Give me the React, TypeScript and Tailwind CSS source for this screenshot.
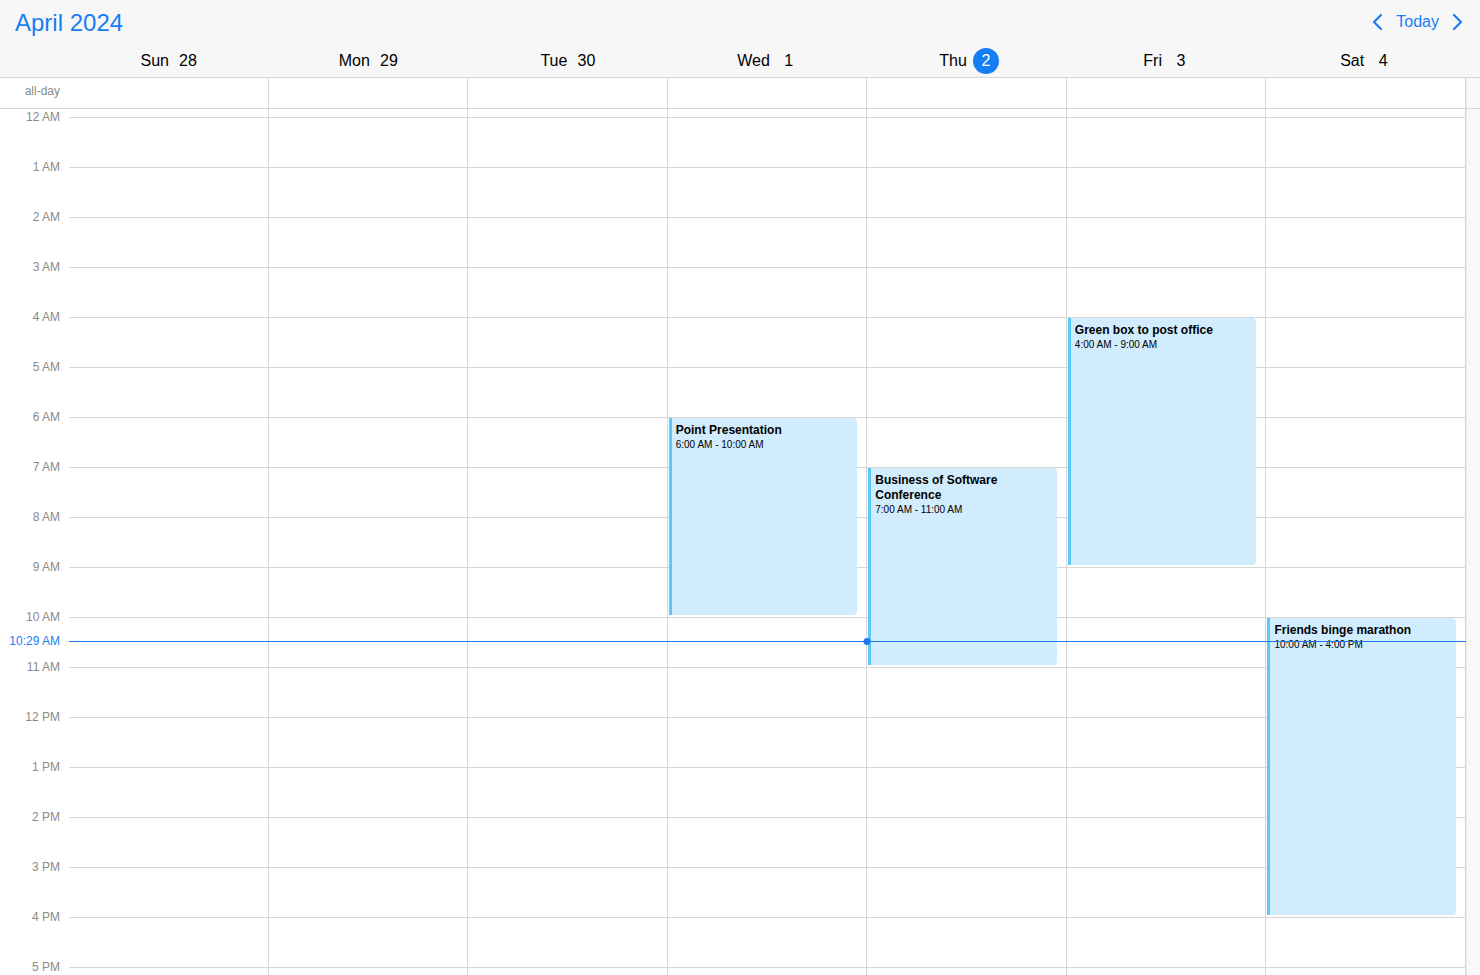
import React from "react";

type CalEvent = {
  day: number;
  start: number;
  end: number;
  title: string;
  time: string;
};

const days = [
  { name: "Sun", date: 28 },
  { name: "Mon", date: 29 },
  { name: "Tue", date: 30 },
  { name: "Wed", date: 1 },
  { name: "Thu", date: 2 },
  { name: "Fri", date: 3 },
  { name: "Sat", date: 4 },
];

const TODAY = 4;
const HOUR = 50;
const TOP_PAD = 8;

const events: CalEvent[] = [
  { day: 3, start: 6, end: 10, title: "Point Presentation", time: "6:00 AM - 10:00 AM" },
  { day: 4, start: 7, end: 11, title: "Business of Software Conference", time: "7:00 AM - 11:00 AM" },
  { day: 5, start: 4, end: 9, title: "Green box to post office", time: "4:00 AM - 9:00 AM" },
  { day: 6, start: 10, end: 16, title: "Friends binge marathon", time: "10:00 AM - 4:00 PM" },
];

const hours = Array.from({ length: 24 }, (_, h) => {
  const suffix = h < 12 ? "AM" : "PM";
  const n = h % 12 === 0 ? 12 : h % 12;
  return `${n} ${suffix}`;
});

// 10:29 AM, snapped to a whole pixel so the 1px line stays crisp
const nowOffset = Math.round(TOP_PAD + (10 + 29 / 60) * HOUR);

function Chevron({ dir }: { dir: "left" | "right" }) {
  return (
    <svg width="12" height="18" viewBox="0 0 12 18" fill="none" stroke="currentColor" strokeWidth="2.2" strokeLinecap="round" strokeLinejoin="round">
      {dir === "left" ? <path d="M10 2 L3 9 L10 16" /> : <path d="M2 2 L9 9 L2 16" />}
    </svg>
  );
}

export default function App() {
  return (
    <div className="flex h-screen flex-col overflow-hidden bg-white font-['Liberation_Sans',Arial,sans-serif] text-black">
      {/* header */}
      <div className="border-b border-[#d6d6d6] bg-[#f7f7f7]">
        <div className="flex h-[44px] items-center justify-between pl-[15px] pr-[16px]">
          <h1 className="pt-[2px] text-[24px] leading-none text-[#167ef5]">April 2024</h1>
          <div className="flex items-center gap-[13px] text-[#167ef5]">
            <Chevron dir="left" />
            <span className="text-[16px]">Today</span>
            <Chevron dir="right" />
          </div>
        </div>
        <div className="ml-[69px] mr-[14px] grid h-[33px] grid-cols-7">
          {days.map((d, i) => (
            <div key={d.name} className="flex items-center justify-center gap-1.5 pl-[4px] text-[16px]">
              <span>{d.name}</span>
              <span
                className={
                  i === TODAY
                    ? "flex h-[26px] w-[26px] items-center justify-center rounded-full bg-[#167ef5] text-white"
                    : "flex h-[26px] w-[26px] items-center justify-center"
                }
              >
                {d.date}
              </span>
            </div>
          ))}
        </div>
      </div>

      {/* all-day row */}
      <div className="flex h-[31px] border-b border-[#d6d6d6]">
        <div className="w-[69px] pr-[9px] pt-[4px] text-right text-[12px] text-[#8a8a8a]">all-day</div>
        <div className="grid flex-1 grid-cols-7">
          {days.map((d) => (
            <div key={d.name} className="border-r border-[#d6d6d6]" />
          ))}
        </div>
        <div className="w-[14px] border-l border-[#ececec] bg-[#f8f8f8]" />
      </div>

      {/* time grid */}
      <div className="flex flex-1 overflow-hidden">
        <div className="relative w-[69px] shrink-0 pt-[1px]">
          {hours.map((h) => (
            <div key={h} className="h-[50px] pr-[9px] text-right text-[12px] leading-[14px] text-[#8a8a8a]">
              {h}
            </div>
          ))}
          <div
            className="absolute right-0 bg-white pr-[9px] text-[12px] leading-[14px] text-[#167ef5]"
            style={{ top: nowOffset - 7 }}
          >
            10:29 AM
          </div>
        </div>

        <div className="relative grid flex-1 grid-cols-7">
          {days.map((d, i) => (
            <div key={d.name} className="relative border-r border-[#d6d6d6] pt-[8px]">
              {hours.map((h) => (
                <div key={h} className="h-[50px] border-t border-[#d6d6d6]" />
              ))}
              {events
                .filter((e) => e.day === i)
                .map((e) => (
                  <div
                    key={e.title}
                    className="absolute left-[1px] right-[9px] overflow-hidden rounded-r-[4px] border-l-[3px] border-[#5ac8fa] bg-[#d1ecfd] px-[4px] pt-[5px]"
                    style={{ top: TOP_PAD + e.start * HOUR + 1, height: (e.end - e.start) * HOUR - 3 }}
                  >
                    <div className="text-[12px] font-bold leading-[15px]">{e.title}</div>
                    <div className="text-[10px] leading-[14px]">{e.time}</div>
                  </div>
                ))}
            </div>
          ))}

          {/* current time indicator */}
          <div className="absolute left-0 right-0 h-px bg-[#1f78f0]" style={{ top: nowOffset }} />
          <div
            className="absolute h-[7px] w-[7px] -translate-x-1/2 rounded-full bg-[#1f78f0]"
            style={{ top: nowOffset - 3, left: `${(TODAY / 7) * 100}%` }}
          />
        </div>

        <div className="w-[14px] shrink-0 border-l border-[#ececec] bg-[#f8f8f8]" />
      </div>
    </div>
  );
}
